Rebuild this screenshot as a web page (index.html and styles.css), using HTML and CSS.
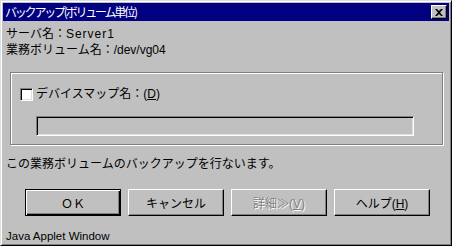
FILE: index.html
```html
<!DOCTYPE html>
<html lang="ja">
<head>
  <meta charset="UTF-8" />
  <title>バックアップ(ボリューム単位)</title>
  <link rel="stylesheet" href="styles.css">
</head>
<body>
  <div class="window">
    <div class="titlebar">
      <span class="title">バックアップ(ボリューム単位)</span>
      <div class="close-btn">
        <svg width="8" height="7" viewBox="0 0 8 7">
          <path d="M0 0h2l2 2 2-2h2L5 3.5 8 7H6L4 5 2 7H0l3-3.5z" fill="#000"/>
        </svg>
      </div>
    </div>

    <div class="content">
      <div class="info">
        <div>サーバ名：<span class="latin">Server1</span></div>
        <div>業務ボリューム名：/dev/vg04</div>
      </div>

      <div class="group">
        <div class="check-row">
          <span class="checkbox"></span>
          <span class="check-label">デバイスマップ名：(<u>D</u>)</span>
        </div>
        <div class="textfield"></div>
      </div>

      <div class="message">この業務ボリュームのバックアップを行ないます。</div>

      <div class="buttons">
        <button class="btn default">ＯＫ</button>
        <button class="btn">キャンセル</button>
        <button class="btn disabled">詳細≫(<u>V</u>)</button>
        <button class="btn">ヘルプ(<u>H</u>)</button>
      </div>

      <div class="status">Java Applet Window</div>
    </div>
  </div>
</body>
</html>
```

FILE: styles.css
```css
* {
  box-sizing: border-box;
  margin: 0;
  padding: 0;
}

body {
  background-color: #c0c0c0;
  font-family: "Liberation Sans", "Noto Sans CJK JP", sans-serif;
  font-size: 12px;
  color: #000;
}

.window {
  width: 452px;
  height: 246px;
  padding: 1px;
  background-color: #c0c0c0;
  border: 1px solid;
  border-color: #dfdfdf #000 #000 #dfdfdf;
  box-shadow: inset 1px 1px #fff, inset -1px -1px #808080;
  display: flex;
  flex-direction: column;
}

.titlebar {
  height: 18px;
  margin: 1px 1px 0 1px;
  background-color: #000080;
  color: #fff;
  display: flex;
  align-items: center;
  justify-content: space-between;
  padding: 0 2px 0 2px;
}

.title {
  line-height: 18px;
  font-family: "Noto Sans CJK JP", sans-serif;
  letter-spacing: -2.2px;
}

.close-btn {
  width: 16px;
  height: 14px;
  background-color: #c0c0c0;
  border: 1px solid;
  border-color: #fff #000 #000 #fff;
  box-shadow: inset -1px -1px #808080;
  display: flex;
  align-items: center;
  justify-content: center;
}

.content {
  flex: 1;
  display: flex;
  flex-direction: column;
  padding: 5px 0 0 4px;
}

.info {
  line-height: 16px;
}

.latin {
  letter-spacing: 1px;
}

.group {
  margin: 14px 7px 0 4px;
  height: 73px;
  border: 1px solid #808080;
  box-shadow: inset 1px 1px #fff, 1px 1px #fff;
  padding: 15px 0 0 9px;
}

.check-row {
  display: flex;
  align-items: center;
  height: 13px;
  gap: 3px;
}

.checkbox {
  width: 13px;
  height: 13px;
  background-color: #fff;
  border: 1px solid;
  border-color: #808080 #fff #fff #808080;
  box-shadow: inset 1px 1px #000, inset -1px -1px #dfdfdf;
}

.check-label {
  line-height: 13px;
}

.textfield {
  margin: 15px 0 0 16px;
  width: 378px;
  height: 20px;
  border: 1px solid;
  border-color: #808080 #fff #fff #808080;
  box-shadow: inset 1px 1px #000, inset -1px -1px #dfdfdf;
}

.message {
  margin-top: 11px;
  line-height: 16px;
}

.buttons {
  display: flex;
  gap: 7px;
  margin: 17px 0 0 19px;
}

.btn {
  width: 96px;
  height: 27px;
  font-family: inherit;
  font-size: 12px;
  background-color: #c0c0c0;
  border: 1px solid;
  border-color: #fff #000 #000 #fff;
  box-shadow: inset -1px -1px #808080;
}

.btn.default {
  border-color: #000;
  box-shadow: inset 1px 1px #fff, inset -1px -1px #000, inset -2px -2px #808080;
}

.btn.disabled {
  color: #808080;
  text-shadow: 1px 1px #fff;
}

.status {
  margin-top: 12px;
  line-height: 16px;
  font-size: 11.5px;
}
```
